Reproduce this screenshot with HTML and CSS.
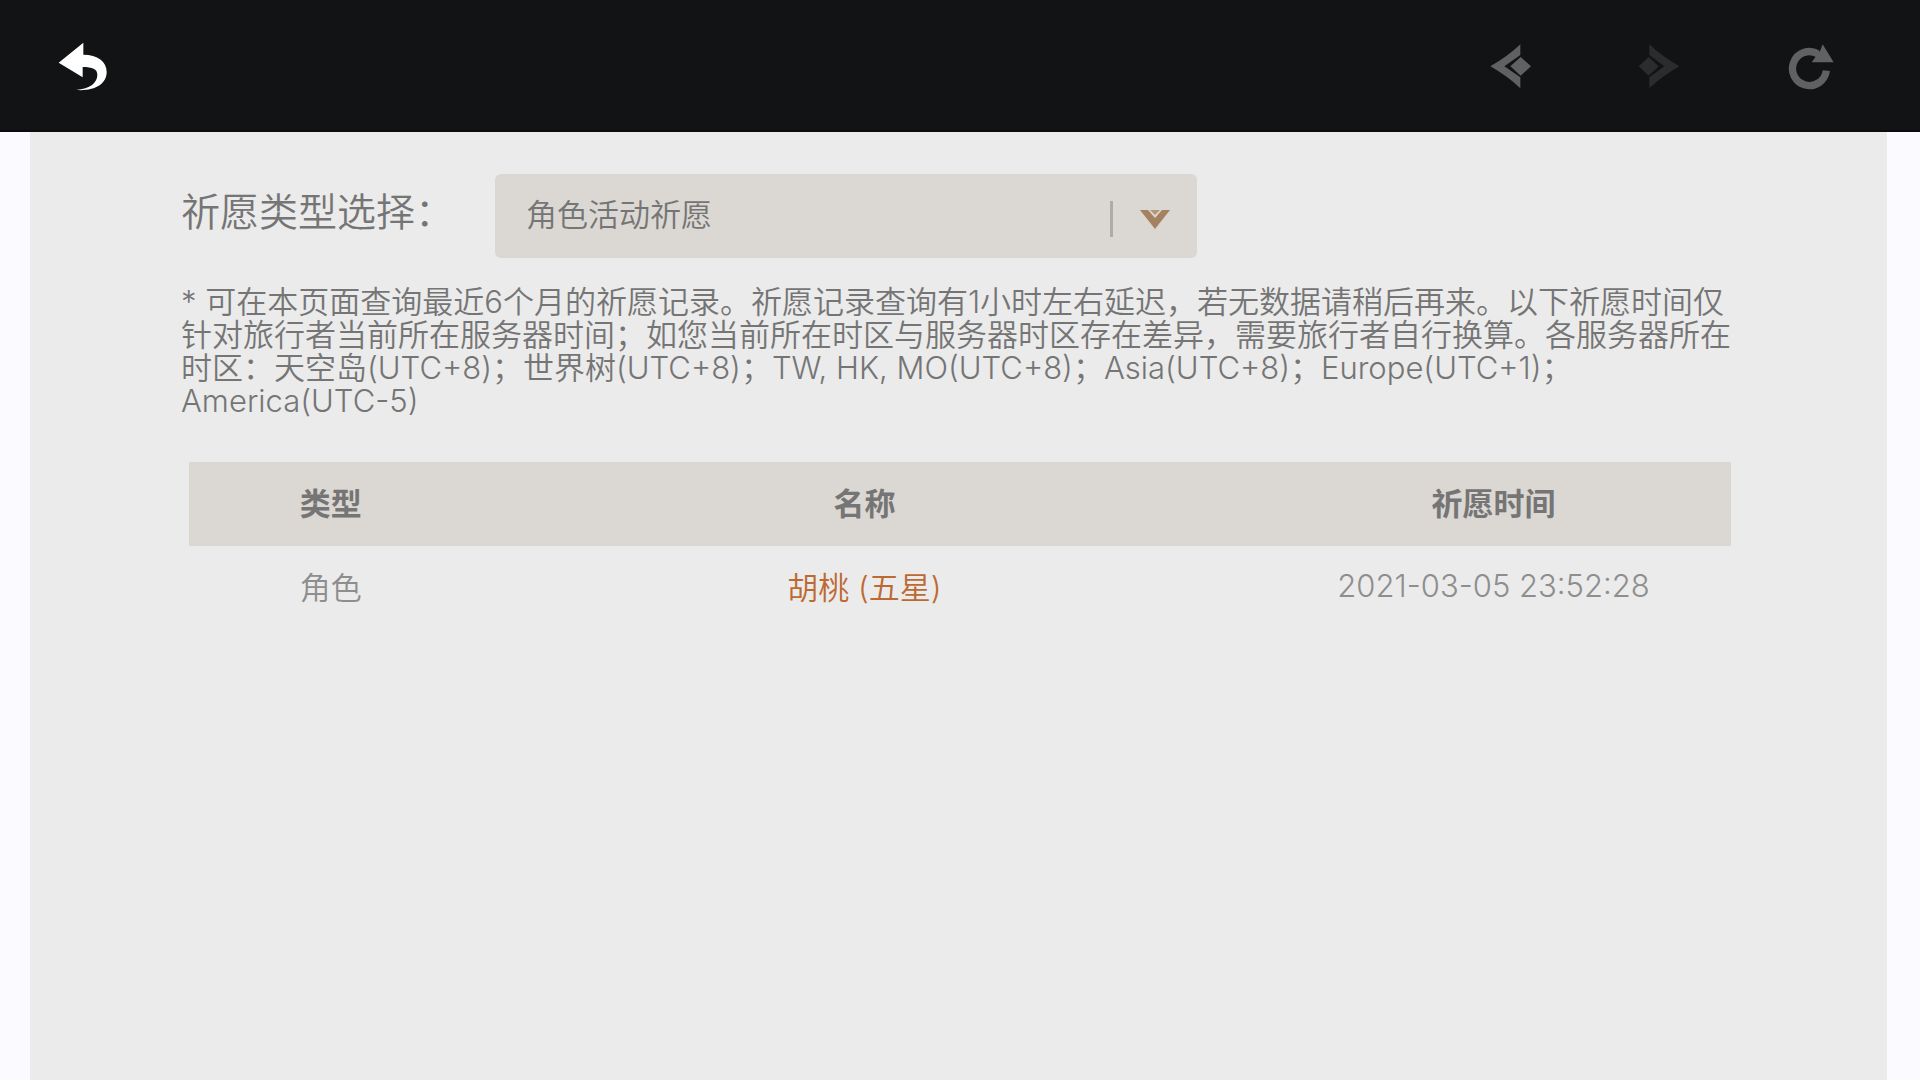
FILE: index.html
```html
<!DOCTYPE html>
<html lang="zh-CN">
<head>
    <meta charset="UTF-8">
    <meta name="viewport" content="width=device-width, initial-scale=1.0">
    <title>祈愿历史记录</title>
    <link rel="stylesheet" href="styles.css">
</head>
<body>
    <header class="toolbar">
        <button class="icon-btn back" type="button" aria-label="返回">
            <svg viewBox="50 62 150 150"><path d="M55 124L129 64V100C172 100 199 120 199 152C199 188 164 210 107 206C150 202 171 184 171 160C171 143 156 137 127 137V168Z"/></svg>
        </button>
        <nav class="history">
            <button class="icon-btn" type="button" aria-label="后退">
                <svg viewBox="60 50 150 150"><path d="M64 123Q118 92 154 57V89L106 123L154 156V189Q118 154 64 123Z"/><path d="M124 123L155 95L186 123L155 151Z"/></svg>
            </button>
            <button class="icon-btn" type="button" aria-label="前进" disabled>
                <svg viewBox="60 50 150 150"><path d="M184 123Q130 92 94 57V89L139 123L94 156V189Q130 154 184 123Z"/><path d="M62 123L92 95L122 123L92 151Z"/></svg>
            </button>
            <button class="icon-btn" type="button" aria-label="刷新">
                <svg viewBox="50 50 150 150"><path class="ring" d="M168 136A51 51 0 1 1 142 85"/><path d="M157 57L190 111H124L137 93L130 84L149 78Z"/></svg>
            </button>
        </nav>
    </header>

    <main class="panel">
        <div class="filter">
            <label for="wish-type">祈愿类型选择：</label>
            <div class="select-box">
                <select id="wish-type">
                    <option selected>角色活动祈愿</option>
                </select>
                <span class="select-mark">
                    <svg viewBox="0 0 30 21"><path class="arrow" d="M0 1H8L15 9L22 1H30L15 20Z"/><path class="gem" d="M10 1H20L15 6Z"/></svg>
                </span>
            </div>
        </div>

        <p class="note">* 可在本页面查询最近6个月的祈愿记录。祈愿记录查询有1小时左右延迟，若无数据请稍后再来。以下祈愿时间仅针对旅行者当前所在服务器时间；如您当前所在时区与服务器时区存在差异，需要旅行者自行换算。各服务器所在时区：天空岛(UTC+8)；世界树(UTC+8)；TW, HK, MO(UTC+8)；Asia(UTC+8)；Europe(UTC+1)；America(UTC-5)</p>

        <table class="log">
            <colgroup>
                <col class="col-type">
                <col class="col-name">
                <col class="col-time">
            </colgroup>
            <thead>
                <tr>
                    <th scope="col">类型</th>
                    <th scope="col">名称</th>
                    <th scope="col">祈愿时间</th>
                </tr>
            </thead>
            <tbody>
                <tr>
                    <td>角色</td>
                    <td class="star5">胡桃 (五星)</td>
                    <td>2021-03-05 23:52:28</td>
                </tr>
            </tbody>
        </table>
    </main>
</body>
</html>
```
FILE: styles.css
```css
* {
    box-sizing: border-box;
}
body {
    margin: 0;
    min-height: 100vh;
    display: flex;
    flex-direction: column;
    background: #fbfaff;
    color: #757575;
    font-family: Inter, "Noto Sans CJK SC", sans-serif;
    font-size: 31px;
    font-weight: 350;
}

/* 顶部工具栏 */
.toolbar {
    display: flex;
    justify-content: space-between;
    align-items: center;
    height: 132px;
    padding: 2px 83px 0 57px;
    background: #111315;
    box-shadow: inset 0 -2px #0b0c0e;
}
.history {
    display: flex;
    gap: 99px;
}
.icon-btn {
    width: 50px;
    height: 50px;
    padding: 0;
    border: none;
    background: none;
    color: #606163;
    cursor: pointer;
}
.icon-btn svg {
    display: block;
    width: 50px;
    height: 50px;
    fill: currentColor;
}
.icon-btn.back {
    color: #fff;
}
.icon-btn:disabled {
    color: #2b2c2e;
    cursor: default;
}
.icon-btn .ring {
    fill: none;
    stroke: currentColor;
    stroke-width: 22;
}

/* 内容区 */
.panel {
    flex: 1;
    margin: 0 33px 0 30px;
    padding: 42px 148px 42px 151px;
    background: #ebebeb;
}
.filter {
    display: flex;
    align-items: center;
    gap: 41px;
}
.filter label {
    padding-bottom: 14px;
    font-size: 39px;
    white-space: nowrap;
}
.select-box {
    position: relative;
    flex: 0 1 702px;
}
.select-box select {
    display: block;
    width: 100%;
    height: 84px;
    padding: 0 90px 4px 31px;
    border: none;
    border-radius: 6px;
    background: #dbd7d2;
    color: inherit;
    font: inherit;
    appearance: none;
}
.select-mark {
    position: absolute;
    top: 27px;
    right: 27px;
    display: flex;
    align-items: center;
    height: 36px;
    padding-left: 27px;
    border-left: 3px solid #aeaba8;
    pointer-events: none;
}
.select-mark svg {
    width: 30px;
    height: 21px;
}
.arrow {
    fill: #a5825f;
}
.gem {
    fill: #b3977b;
}

.note {
    margin: 27px 0 0;
    line-height: 33px;
}

/* 祈愿记录 */
.log {
    width: calc(100% - 16px);
    margin: 45px 8px 0;
    border-collapse: collapse;
    table-layout: fixed;
    text-align: center;
}
.col-type {
    width: 18.4%;
}
.col-name {
    width: 50.8%;
}
.col-time {
    width: 30.8%;
}
.log th,
.log td {
    height: 84px;
    padding: 0 8px 6px;
}
.log th {
    background: #dbd7d2;
    font-weight: 700;
}
.log td {
    color: #8e8e8e;
}
.log .star5 {
    color: #bd6932;
}
```
